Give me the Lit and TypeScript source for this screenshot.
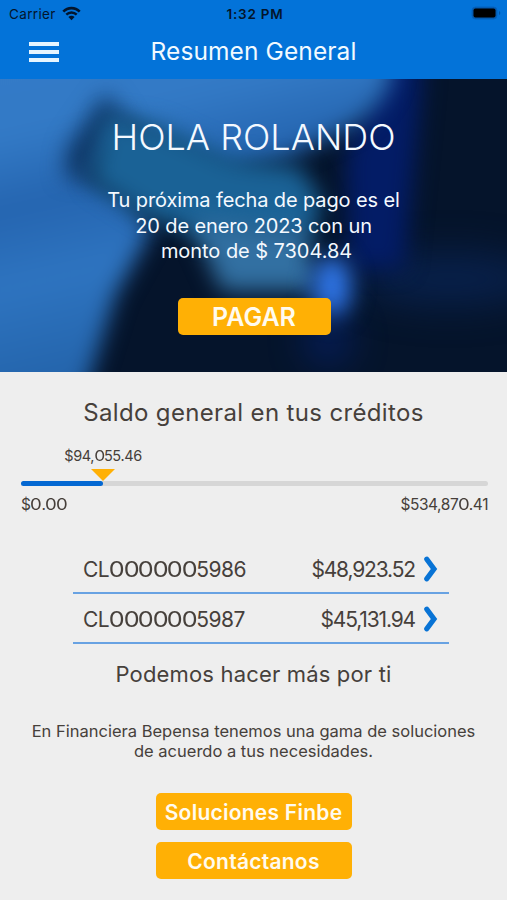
import { LitElement, html, css, svg } from "lit";
import { customElement, property } from "lit/decorators.js";

/** Wraps each run of zeros so that it can be drawn rounder than the other digits. */
const figures = (value: string) =>
  value.split(/(0+)/).map((part) => (/^0+$/.test(part) ? html`<span class="zero">${[...part].map((z) => html`<span>${z}</span>`)}</span>` : part));

const figureStyles = css`
  .zero > span {
    display: inline-block;
    transform: scaleX(1.2);
    margin: 0 0.042em;
  }
`;

@customElement("status-bar")
class StatusBar extends LitElement {
  static styles = css`
    :host {
      display: grid;
      grid-template-columns: 1fr auto 1fr;
      align-items: center;
      height: 27px;
      padding: 0 6px 0 9px;
      color: #03152c;
      font-size: 13.5px;
    }
    .carrier {
      display: flex;
      align-items: center;
      gap: 6px;
      letter-spacing: 0.35px;
    }
    .time {
      font-weight: 600;
      font-size: 13.5px;
      letter-spacing: 0.75px;
    }
    .battery {
      justify-self: end;
    }
    svg {
      display: block;
      margin-top: -1px;
    }
  `;
  render() {
    return html`
      <div class="carrier">
        <span>Carrier</span>
        <svg width="19" height="15" viewBox="0 0 19 15" fill="none" stroke="#03152c">
          <path d="M1.3 5.6C5.8 .9 13.2 .9 17.7 5.6" stroke-width="2.6" />
          <path d="M4.3 8.7C7.2 5.8 11.8 5.8 14.7 8.7" stroke-width="2.4" />
          <path d="M9.5 14.2L6.4 10.9C8.2 9.3 10.8 9.3 12.6 10.9Z" fill="#03152c" stroke="none" />
        </svg>
      </div>
      <span class="time">1:32 PM</span>
      <svg class="battery" width="30" height="14" viewBox="0 0 30 14">
        <rect x="1" y="1" width="25" height="12" rx="3.5" fill="#0456a8" stroke="#0462bd" />
        <rect x="2.5" y="2.5" width="22" height="9" rx="2" fill="#000" />
        <path d="M28 5v4q1.3-.7 1.3-2T28 5Z" fill="#0456a8" />
      </svg>
    `;
  }
}

@customElement("hero-backdrop")
class HeroBackdrop extends LitElement {
  static styles = css`
    :host,
    svg {
      display: block;
      width: 100%;
      height: 100%;
    }
  `;
  render() {
    return html`<svg viewBox="0 0 507 293" preserveAspectRatio="none">
      <defs>
        <filter id="soft" filterUnits="userSpaceOnUse" x="-80" y="-80" width="667" height="453" color-interpolation-filters="sRGB"><feGaussianBlur stdDeviation="11" /></filter>
        <filter id="softer" filterUnits="userSpaceOnUse" x="-80" y="-80" width="667" height="453" color-interpolation-filters="sRGB"><feGaussianBlur stdDeviation="18" /></filter>
        <linearGradient id="sky" x1="0" y1="0" x2=".25" y2="1">
          <stop offset="0" stop-color="#347bc8" />
          <stop offset=".3" stop-color="#337ac6" />
          <stop offset=".47" stop-color="#2565b0" />
          <stop offset=".65" stop-color="#2e74c0" />
          <stop offset="1" stop-color="#1f5da2" />
        </linearGradient>
      </defs>
      ${svg`
        <rect width="507" height="293" fill="#05142b" />
        <ellipse cx="450" cy="200" rx="90" ry="26" fill="#08204a" filter="url(#softer)" />
        <path d="M385-30H422V10L404 190H350L345 80Z" fill="#031c66" filter="url(#soft)" />
        <path d="M-60-60H392V0Q380 34 345 52L285 80L230 90L120 40L80 95L125 120L152 150L116 215L74 350H-60Z" fill="url(#sky)" filter="url(#soft)" />
        <path d="M106 14L128 45L92 98H64L68 68Z" fill="#0f3766" filter="url(#soft)" />
        <path d="M105 36L160 46L235 80L300 88L322 122L310 160L215 162L145 137L90 102Z" fill="#1a6296" filter="url(#soft)" />
        <path d="M190 140L305 150L318 212L222 212Z" fill="#3270a2" filter="url(#soft)" />
        <ellipse cx="332" cy="208" rx="20" ry="32" fill="#2f74e4" filter="url(#soft)" />
        <ellipse cx="328" cy="262" rx="24" ry="24" fill="#05247a" opacity=".6" filter="url(#softer)" />
      `}
    </svg>`;
  }
}

@customElement("balance-meter")
class BalanceMeter extends LitElement {
  @property({ type: Number }) paid = 94055.46;
  @property({ type: Number }) total = 534870.41;
  static styles = [
    figureStyles,
    css`
      :host {
        display: block;
        margin: 0 19px 0 21px;
        color: #463f3a;
      }
      .marker {
        display: flex;
        flex-direction: column;
        align-items: center;
        gap: 4px;
        width: 164px;
        font-size: 14.5px;
        line-height: 18px;
        letter-spacing: -0.4px;
      }
      .arrow {
        width: 24px;
        height: 12px;
        background: #ffb005;
        clip-path: polygon(0 0, 100% 0, 50% 100%);
      }
      .track {
        height: 5px;
        border-radius: 3px;
        background: #d6d6d6;
      }
      .fill {
        height: 100%;
        border-radius: 3px;
        background: #0468d2;
      }
      .ends {
        display: flex;
        justify-content: space-between;
        margin-top: 9px;
        font-size: 15.5px;
        line-height: 20px;
        letter-spacing: -0.2px;
      }
      .ends :last-child {
        letter-spacing: -0.45px;
      }
    `,
  ];
  private money(value: number) {
    return figures("$" + value.toLocaleString("en-US", { minimumFractionDigits: 2 }));
  }
  render() {
    return html`
      <div class="marker"><span>${this.money(this.paid)}</span><i class="arrow"></i></div>
      <div class="track"><div class="fill" style="width:${(this.paid / this.total) * 100}%"></div></div>
      <div class="ends"><span>${this.money(0)}</span><span>${this.money(this.total)}</span></div>
    `;
  }
}

@customElement("credit-row")
class CreditRow extends LitElement {
  @property() code = "";
  @property() amount = "";
  static styles = [
    figureStyles,
    css`
      :host {
        display: flex;
        align-items: center;
        box-sizing: border-box;
        height: 50px;
        padding: 2px 10px 0 10px;
        border-bottom: 2px solid #68a2e2;
        color: #46403b;
        font-size: 21px;
        letter-spacing: -0.5px;
      }
      .amount {
        margin-left: auto;
        margin-right: 9px;
        letter-spacing: -1.15px;
      }
    `,
  ];
  render() {
    return html`
      <span>${figures(this.code)}</span>
      <span class="amount">${this.amount}</span>
      <svg width="15" height="26" viewBox="0 0 15 26" fill="none" stroke="#0873d5" stroke-width="5.2">
        <path d="M2.8 3.2L10 13L2.8 22.8" stroke-linecap="round" />
      </svg>
    `;
  }
}

@customElement("app-root")
class AppRoot extends LitElement {
  static styles = css`
    :host {
      display: block;
      height: 900px;
      overflow: hidden;
      background: #eee;
      color: #46403b;
      font-family: Inter, "Liberation Sans", sans-serif;
      text-align: center;
    }
    header {
      height: 79px;
      background: #0373d9;
    }
    .bar {
      display: grid;
      grid-template-columns: 1fr auto 1fr;
      align-items: center;
      height: 49px;
      padding: 0 29px;
      color: #f2faff;
    }
    .menu {
      display: flex;
      flex-direction: column;
      gap: 4px;
      width: 30px;
    }
    .menu i {
      height: 4px;
      background: #e6f5ff;
    }
    h1,
    h2,
    p {
      margin: 0;
      font-weight: 400;
    }
    .bar h1 {
      padding-bottom: 2px;
      font-size: 24.5px;
      letter-spacing: 0.1px;
    }
    .hero {
      display: grid;
      height: 293px;
      color: #f4f9ff;
      overflow: hidden;
    }
    .hero > * {
      grid-area: 1 / 1;
      min-height: 0;
    }
    .greeting {
      display: flex;
      flex-direction: column;
      align-items: center;
      z-index: 1;
    }
    .greeting h2 {
      margin-top: 36px;
      font-size: 36px;
      font-weight: 300;
      line-height: 44px;
    }
    .due {
      margin-top: 29px;
      font-size: 20px;
      line-height: 25.5px;
      letter-spacing: -0.12px;
    }
    .due .sum {
      padding-left: 6px;
      letter-spacing: -0.05px;
    }
    button {
      display: block;
      padding: 0;
      border: 0;
      border-radius: 5px;
      background: #ffb005;
      color: #fffbef;
      font-family: inherit;
      font-weight: 600;
    }
    .pay {
      width: 153px;
      height: 37px;
      margin: 33px 0 0 1px;
      padding-top: 2px;
      font-size: 25px;
    }
    .heading {
      margin-top: 26px;
      font-size: 24px;
      line-height: 30px;
      letter-spacing: 0.35px;
    }
    balance-meter {
      margin-top: 19px;
      text-align: left;
    }
    .credits {
      margin: 29px 58px 0 73px;
    }
    .more {
      margin-top: 16px;
      font-size: 22px;
      line-height: 28px;
      letter-spacing: 0.17px;
    }
    .pitch {
      margin-top: 33px;
      font-size: 16.5px;
      line-height: 20px;
    }
    .actions {
      display: flex;
      flex-direction: column;
      align-items: center;
      gap: 12px;
      margin-top: 32px;
    }
    .actions button {
      width: 196px;
      height: 37px;
      padding-top: 2px;
      font-size: 21px;
      letter-spacing: 0.25px;
    }
  `;
  render() {
    return html`
      <header>
        <status-bar></status-bar>
        <div class="bar">
          <div class="menu"><i></i><i></i><i></i></div>
          <h1>Resumen General</h1>
        </div>
      </header>
      <section class="hero">
        <hero-backdrop></hero-backdrop>
        <div class="greeting">
          <h2>HOLA ROLANDO</h2>
          <p class="due">Tu próxima fecha de pago es el<br />20 de enero 2023 con un<br /><span class="sum">monto de $ 7304.84</span></p>
          <button class="pay">PAGAR</button>
        </div>
      </section>
      <h2 class="heading">Saldo general en tus créditos</h2>
      <balance-meter></balance-meter>
      <section class="credits">
        <credit-row code="CL0000005986" amount="$48,923.52"></credit-row>
        <credit-row code="CL0000005987" amount="$45,131.94"></credit-row>
      </section>
      <h2 class="more">Podemos hacer más por ti</h2>
      <p class="pitch">En Financiera Bepensa tenemos una gama de soluciones<br />de acuerdo a tus necesidades.</p>
      <div class="actions">
        <button>Soluciones Finbe</button>
        <button>Contáctanos</button>
      </div>
    `;
  }
}
